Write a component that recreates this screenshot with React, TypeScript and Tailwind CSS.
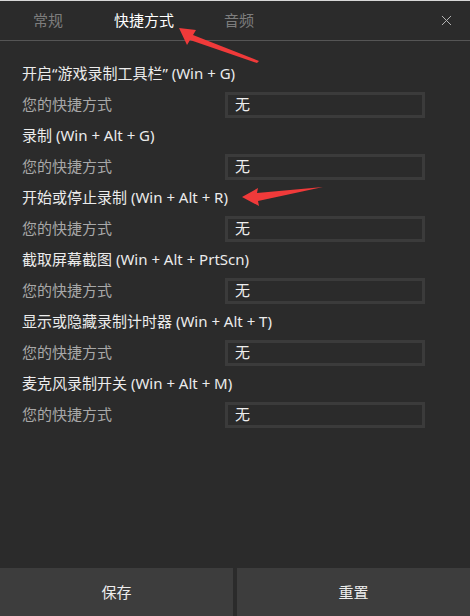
import { X } from "lucide-react";

const shortcuts = [
  "开启“游戏录制工具栏” (Win + G)",
  "录制 (Win + Alt + G)",
  "开始或停止录制 (Win + Alt + R)",
  "截取屏幕截图 (Win + Alt + PrtScn)",
  "显示或隐藏录制计时器 (Win + Alt + T)",
  "麦克风录制开关 (Win + Alt + M)",
];

const ShortcutRow = ({ title }: { title: string }) => (
  <div>
    <div className="h-[31px] flex items-center px-[22px] text-[15px] text-[#ececec]">{title}</div>
    <div className="h-[31px] flex items-center px-[22px]">
      <span className="w-[203px] text-[15px] text-[#a8a8a8]">您的快捷方式</span>
      <div className="h-[26px] w-[200px] border-[3px] border-[#3b3b3b] flex items-center px-[7px] text-[15px] text-[#eeeeee]">
        无
      </div>
    </div>
  </div>
);

export default function App() {
  return (
    <div
      className="relative h-[616px] w-[470px] bg-[#2b2b2b] flex flex-col overflow-hidden"
      style={{ fontFamily: '"Noto Sans", "Noto Sans CJK SC", sans-serif' }}
    >
      <div className="h-px bg-[#d8d8d8]" />
      {/* 标签栏 */}
      <div className="h-[40px] flex items-center border-b border-[#555555] text-[15px]">
        <span className="ml-[33px] text-[#7d7d7d]">常规</span>
        <span className="ml-[51px] text-white">快捷方式</span>
        <span className="ml-[50px] text-[#7d7d7d]">音频</span>
        <X className="ml-auto mr-[15px] w-[17px] h-[17px] text-[#b5b5b5]" strokeWidth={1.4} />
      </div>

      {/* 快捷方式列表 */}
      <div className="flex-1 pt-[17px]">
        {shortcuts.map((title) => (
          <ShortcutRow key={title} title={title} />
        ))}
      </div>

      {/* 底部按钮 */}
      <div className="h-[48px] flex gap-[4px]">
        <button className="flex-1 bg-[#3d3d3d] text-[15px] text-[#eeeeee]">保存</button>
        <button className="flex-1 bg-[#3d3d3d] text-[15px] text-[#eeeeee]">重置</button>
      </div>

      {/* 标注箭头 */}
      <svg className="absolute inset-0 pointer-events-none" width="470" height="616">
        <polygon points="179,28 196,30 193,35 259,61 257,63 190,40 187,45" fill="#f03a3a" />
        <polygon points="242,197 258,188 257,193 323,187 258,201 259,206" fill="#f03a3a" />
      </svg>
    </div>
  );
}
